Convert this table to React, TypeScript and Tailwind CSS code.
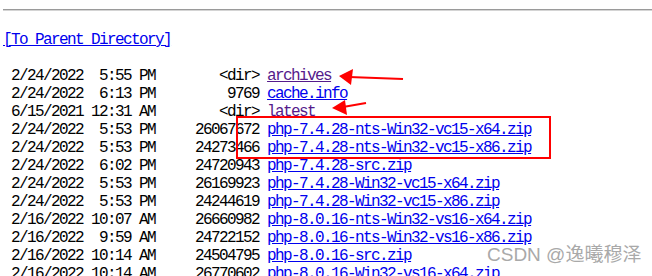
const rows = [
  { date: "2/24/2022", time: "5:55 PM", size: "<dir>", name: "archives", visited: true },
  { date: "2/24/2022", time: "6:13 PM", size: "9769", name: "cache.info" },
  { date: "6/15/2021", time: "12:31 AM", size: "<dir>", name: "latest", visited: true },
  { date: "2/24/2022", time: "5:53 PM", size: "26067672", name: "php-7.4.28-nts-Win32-vc15-x64.zip" },
  { date: "2/24/2022", time: "5:53 PM", size: "24273466", name: "php-7.4.28-nts-Win32-vc15-x86.zip" },
  { date: "2/24/2022", time: "6:02 PM", size: "24720943", name: "php-7.4.28-src.zip" },
  { date: "2/24/2022", time: "5:53 PM", size: "26169923", name: "php-7.4.28-Win32-vc15-x64.zip" },
  { date: "2/24/2022", time: "5:53 PM", size: "24244619", name: "php-7.4.28-Win32-vc15-x86.zip" },
  { date: "2/16/2022", time: "10:07 AM", size: "26660982", name: "php-8.0.16-nts-Win32-vs16-x64.zip" },
  { date: "2/16/2022", time: "9:59 AM", size: "24722152", name: "php-8.0.16-nts-Win32-vs16-x86.zip" },
  { date: "2/16/2022", time: "10:14 AM", size: "24504795", name: "php-8.0.16-src.zip" },
  { date: "2/16/2022", time: "10:14 AM", size: "26770602", name: "php-8.0.16-Win32-vs16-x64.zip" },
];

export default function App() {
  return (
    <div className="relative w-[652px] h-[276px] overflow-hidden bg-white text-black">
      {/* hr under the (cut off) heading */}
      <div className="ml-[3px] mt-[9px] h-[2px] border-t border-b border-t-[#9a9a9a] border-b-[#d4d4d4]" />

      <pre className="mt-[20px] ml-[3px] text-[16px] leading-[18px] tracking-[-1.6px] font-['Liberation_Mono','Courier_New',monospace]">
        <a href="#" className="text-[#0000ee] underline">[To Parent Directory]</a>
        {"\n\n"}
        {rows.map((r) => (
          <span key={r.name}>
            {" " + r.date.padStart(9) + " " + r.time.padStart(8) + r.size.padStart(13) + " "}
            <a href="#" className={r.visited ? "text-[#551a8b] underline" : "text-[#0000ee] underline"}>
              {r.name}
            </a>
            {"\n"}
          </span>
        ))}
      </pre>

      {/* red annotations drawn over the screenshot */}
      <svg className="absolute inset-0 pointer-events-none" width="652" height="276">
        <rect x="237" y="117" width="313" height="41" fill="none" stroke="#ff0000" strokeWidth="2" />
        <line x1="403" y1="79" x2="349" y2="77" stroke="#ff0000" strokeWidth="2" />
        <polygon points="339,76 353,69 351,85" fill="#ff0000" />
        <line x1="366" y1="103" x2="343" y2="107" stroke="#ff0000" strokeWidth="2" />
        <polygon points="332,108 345,100 347,115" fill="#ff0000" />
      </svg>

      <div className="absolute left-[487px] top-[243px] text-[19px] leading-[24px] text-[#a9a9a9] font-['Liberation_Sans','Noto_Sans_CJK_SC',sans-serif]">
        CSDN @逸曦穆泽
      </div>
    </div>
  );
}
